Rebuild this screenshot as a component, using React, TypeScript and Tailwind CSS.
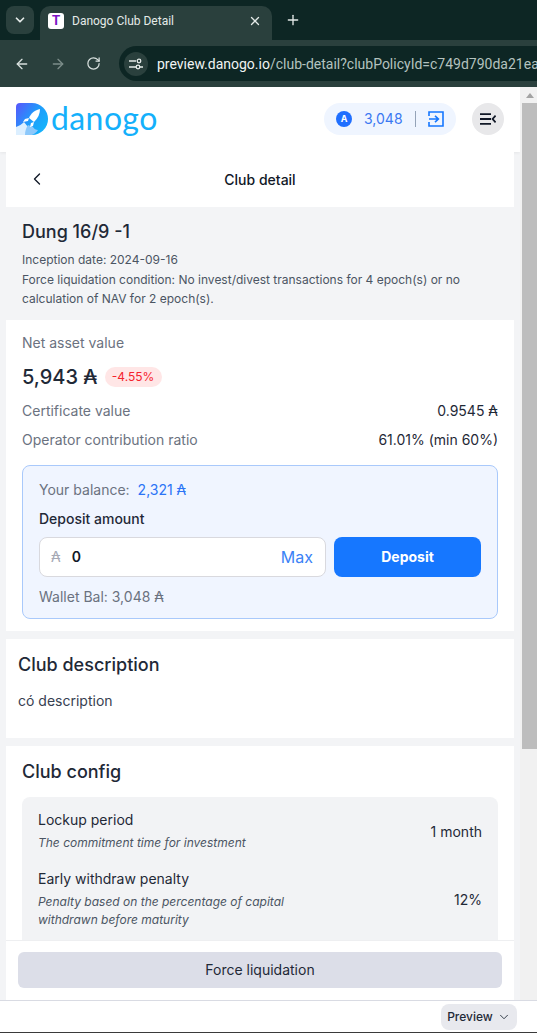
import { ArrowLeft, ArrowRight, ChevronDown, ChevronLeft, Plus, RotateCw, X } from "lucide-react";

const inter = "font-['Inter',sans-serif]";

function Logo() {
  return (
    <svg width="32" height="32" viewBox="0 0 32 32">
      <defs>
        <linearGradient id="logoBg" x1="0" y1="0" x2="1" y2="0.7">
          <stop offset="0" stopColor="#5a55fb" />
          <stop offset="0.55" stopColor="#1f9bfb" />
          <stop offset="1" stopColor="#14b4fb" />
        </linearGradient>
      </defs>
      <path d="M4 0H16A16 16 0 0 1 16 32H4A4 4 0 0 1 0 28V4A4 4 0 0 1 4 0Z" fill="url(#logoBg)" />
      {/* exhaust clouds */}
      <path d="M0 32V24C3 23 6 21 8 19L12 24C11 27 11 30 12 32Z" fill="#dcefff" />
      <path d="M9 32C9 28 10 25 12 22L17 24C18 26 20 27 22 27C20 30 18 31 16 32Z" fill="#8cc8fb" />
      {/* rocket */}
      <path d="M24 6C24 11 22 15 18 19L13 15C15 10 19 7 24 6Z" fill="#ffffff" />
      <path d="M13 15L9 16L7 19L12 18ZM18 19L17 23L14 24L15 20Z" fill="#ffffff" />
    </svg>
  );
}

function AdaCoin() {
  return (
    <div className="w-4 h-4 rounded-full bg-[#1f6fff] flex items-center justify-center text-white text-[9px] font-bold">A</div>
  );
}

function LoginIcon() {
  return (
    <svg width="16" height="16" viewBox="0 0 16 16" fill="none" stroke="#1677ff" strokeWidth="1.6">
      <path d="M1 5V1H15V15H1V11" />
      <path d="M1 8H10M7 4.8L10.4 8L7 11.2" />
    </svg>
  );
}

function MenuIcon() {
  return (
    <svg width="16" height="12" viewBox="0 0 16 12" fill="none" stroke="#111827" strokeWidth="1.8">
      <path d="M0 1.2H11M0 6H11M0 10.8H11" />
      <path d="M15.6 2.6L12.6 6L15.6 9.4" />
    </svg>
  );
}

function Row({ label, value }: { label: string; value: string }) {
  return (
    <div className="flex justify-between items-center h-[29px] text-sm">
      <span className="text-[#6b7280]">{label}</span>
      <span className="text-[#1f2937]">{value}</span>
    </div>
  );
}

export default function App() {
  return (
    <div className={`h-[1033px] flex flex-col overflow-hidden bg-white ${inter}`}>
      {/* browser chrome */}
      <div className="h-[40px] bg-[#0d2624] flex items-end pl-[6px] shrink-0">
        <div className="w-[28px] h-[28px] mb-[6px] rounded-lg bg-[#2a403d] flex items-center justify-center text-[#e4eae8]">
          <ChevronDown size={14} strokeWidth={3} />
        </div>
        <div className="ml-[6px] w-[232px] h-[34px] rounded-t-[10px] bg-[#2a403d] flex items-center pl-[8px] pr-[10px] pb-[4px]">
          <div className="w-4 h-4 rounded-[3px] bg-white flex items-center justify-center text-[#7c14c4] text-[13px] font-bold">T</div>
          <span className="ml-[8px] text-xs text-[#e4eae8] font-['Roboto',sans-serif] flex-1">Danogo Club Detail</span>
          <X size={14} className="text-[#e4eae8]" strokeWidth={2.2} />
        </div>
        <Plus size={16} className="ml-[13px] mb-[12px] text-[#e4eae8]" strokeWidth={2} />
      </div>
      <div className="h-[47px] bg-[#2a403d] flex items-center pl-[14px] shrink-0">
        <ArrowLeft size={16} className="text-[#d8e0de]" />
        <ArrowRight size={16} className="ml-[20px] text-[#7c8d8a]" />
        <RotateCw size={15} className="ml-[20px] text-[#d8e0de]" />
        <div className="ml-[18px] flex-1 h-[35px] rounded-l-full bg-[#0d2624] flex items-center pl-[5px] overflow-hidden">
          <div className="w-[24px] h-[24px] rounded-full bg-[#2a403d] flex items-center justify-center shrink-0">
            <svg width="14" height="12" viewBox="0 0 14 12" fill="none" stroke="#e4eae8" strokeWidth="1.3">
              <path d="M0 3H7M0 9H7M11 9H14" />
              <circle cx="10" cy="3" r="1.8" />
              <circle cx="9" cy="9" r="1.8" />
            </svg>
          </div>
          <span className="ml-[9px] mt-[1px] text-[14px] text-[#f0f4f3] whitespace-nowrap font-['Roboto',sans-serif]">
            preview.danogo.io<span className="text-[#b4c2bf]">/club-detail?clubPolicyId=c749d790da21ea</span>
          </span>
        </div>
      </div>

      {/* page */}
      <div className="relative flex-1 flex overflow-hidden bg-[#f3f4f6]">
        <div className="w-[520px] shrink-0 flex flex-col">
          <div className="h-[65px] bg-white shadow-[0_1px_3px_rgba(0,0,0,0.06)] flex items-center px-[16px] pb-px shrink-0">
            <Logo />
            <span className="ml-[3px] text-[32px] leading-none tracking-[0.4px] text-[#14b0fb] font-['Lato',sans-serif] -mt-[3px]">danogo</span>
            <div className="ml-auto w-[132px] h-[32px] rounded-full bg-[#eff5ff] flex items-center pl-[12px]">
              <AdaCoin />
              <span className="ml-[12px] text-sm text-[#3a78f2]">3,048</span>
              <div className="ml-[12px] w-px h-[16px] bg-[#94a3b8]" />
              <div className="ml-[12px]">
                <LoginIcon />
              </div>
            </div>
            <div className="ml-[16px] w-[32px] h-[32px] rounded-full bg-[#e8e8ea] flex items-center justify-center">
              <MenuIcon />
            </div>
          </div>

          <div className="mx-[6px] flex flex-col">
            <div className="h-[55px] bg-white flex items-center justify-center relative">
              <ChevronLeft size={20} strokeWidth={1.6} className="absolute left-[21px] top-[17px] text-[#111827]" />
              <span className="text-sm font-medium text-[#111827]">Club detail</span>
            </div>

            <div className="h-[113px] px-[16px] pt-[13px]">
              <h1 className="text-[18px] leading-[24px] font-medium text-[#1f2937]">Dung 16/9 -1</h1>
              <p className="mt-[6px] text-xs leading-[19.5px] text-[#4b5563]">
                Inception date: 2024-09-16
                <br />
                Force liquidation condition: No invest/divest transactions for 4 epoch(s) or no calculation of NAV for 2 epoch(s).
              </p>
            </div>

            <div className="h-[311px] bg-white px-[16px] pt-[13px]">
              <div className="text-sm leading-[20px] text-[#6b7280]">Net asset value</div>
              <div className="mt-[12px] h-[24px] flex items-center">
                <span className="text-[20px] font-medium text-[#1f2937]">5,943 ₳</span>
                <span className="ml-[7px] h-[20px] w-[57px] rounded-full bg-[#ffe6e6] flex items-center justify-center text-xs text-[#f5222d]">-4.55%</span>
              </div>
              <div className="mt-[7px]">
                <Row label="Certificate value" value="0.9545 ₳" />
                <Row label="Operator contribution ratio" value="61.01% (min 60%)" />
              </div>
              <div className="mt-[11px] h-[154px] rounded-lg border border-[#a9c9fb] bg-[#f0f5ff] px-[16px] pt-[15px]">
                <div className="text-sm leading-[18px] text-[#6b7280]">
                  Your balance:<span className="ml-[8px] text-[#2b74f6]">2,321 ₳</span>
                </div>
                <div className="mt-[11px] text-sm leading-[18px] font-medium text-[#1f2937]">Deposit amount</div>
                <div className="mt-[9px] flex gap-[8px]">
                  <div className="w-[287px] h-[40px] rounded-lg border border-[#d9d9de] bg-white flex items-center pl-[11px] pr-[12px]">
                    <span className="text-sm text-[#a6a9b5]">₳</span>
                    <span className="ml-[11px] text-sm font-semibold text-[#111827]">0</span>
                    <span className="ml-auto text-base text-[#3b82f6]">Max</span>
                  </div>
                  <div className="w-[147px] h-[40px] rounded-lg bg-[#1677ff] flex items-center justify-center text-sm font-bold text-white">Deposit</div>
                </div>
                <div className="mt-[11px] text-sm leading-[18px] text-[#6b7280]">Wallet Bal: 3,048 ₳</div>
              </div>
            </div>

            <div className="mt-[8px] h-[99px] bg-white px-[12px] pt-[14px]">
              <h2 className="text-[18px] leading-[24px] font-medium text-[#1f2937]">Club description</h2>
              <p className="mt-[14px] text-sm leading-[20px] text-[#374151]">có description</p>
            </div>

            <div className="mt-[8px] h-[300px] bg-white px-[16px] pt-[14px]">
              <h2 className="text-[18px] leading-[24px] font-medium text-[#1f2937]">Club config</h2>
              <div className="mt-[13px] h-[260px] rounded-lg bg-[#f2f3f5] px-[16px] pt-[14px]">
                <div className="flex items-center justify-between">
                  <div>
                    <div className="text-sm leading-[18px] text-[#1f2937]">Lockup period</div>
                    <div className="mt-[5px] text-xs leading-[18px] italic text-[#4b5563]">The commitment time for investment</div>
                  </div>
                  <span className="text-sm text-[#1f2937]">1 month</span>
                </div>
                <div className="mt-[18px] flex items-center justify-between">
                  <div className="w-[270px]">
                    <div className="text-sm leading-[18px] text-[#1f2937]">Early withdraw penalty</div>
                    <div className="mt-[5px] text-xs leading-[18px] italic text-[#4b5563]">Penalty based on the percentage of capital withdrawn before maturity</div>
                  </div>
                  <span className="text-sm text-[#1f2937]">12%</span>
                </div>
              </div>
            </div>
          </div>
        </div>

        {/* sticky action over the content */}
        <div className="absolute left-[6px] bottom-0 w-[508px] h-[60px] bg-white border-t border-[#eeeff1] px-[12px] pt-[11px]">
          <div className="h-[36px] rounded-md bg-[#dcdee8] flex items-center justify-center text-sm text-[#1f2937]">Force liquidation</div>
        </div>

        {/* scrollbar */}
        <div className="w-[17px] shrink-0 bg-[#f1f1f1] flex flex-col items-end">
          <div className="w-[15px] h-[16px] flex items-center justify-center">
            <div className="w-0 h-0 border-x-[4px] border-x-transparent border-b-[5px] border-b-[#a3a3a3]" />
          </div>
          <div className="w-[15px] h-[646px] bg-[#bdbdbd]" />
        </div>
      </div>

      {/* preview bar */}
      <div className="h-[33px] bg-white border-t border-[#d9dbe3] border-b border-b-[#3a3a3a] flex items-center justify-end pr-[20px] shrink-0">
        <div className="w-[76px] h-[26px] rounded-lg bg-[#e8e9ee] flex items-center justify-center gap-[4px] text-xs font-medium text-[#1f2937]">
          Preview
          <ChevronDown size={14} strokeWidth={1.5} />
        </div>
      </div>
    </div>
  );
}
